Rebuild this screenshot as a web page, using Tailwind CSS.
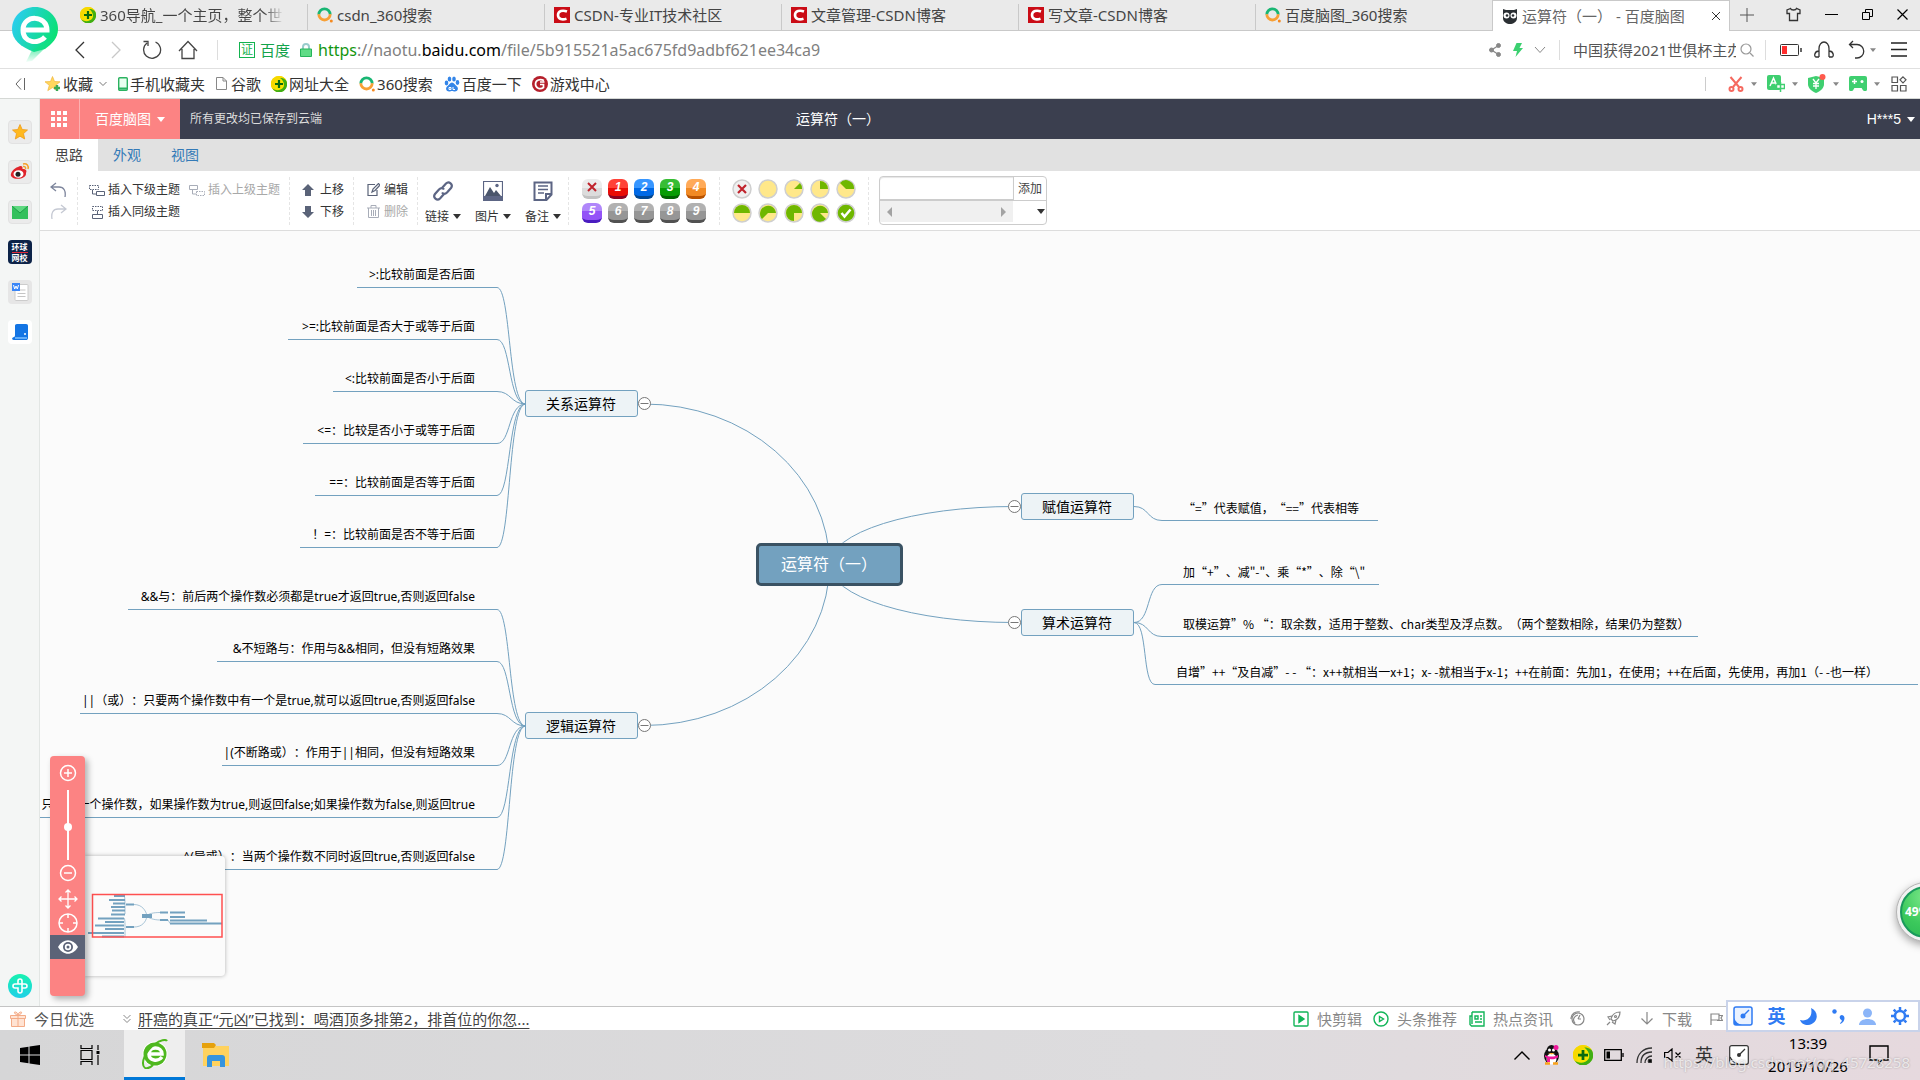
<!DOCTYPE html>
<html lang="zh-CN">
<head>
<meta charset="utf-8">
<title>运算符（一） - 百度脑图</title>
<script src="https://cdn.jsdelivr.net/npm/@tailwindcss/browser@4"></script>
</head>
<body class="h-screen flex flex-col overflow-hidden bg-white text-[15px] leading-5 text-[#444] font-['Noto_Sans','Noto_Sans_CJK_SC',sans-serif] [text-spacing-trim:space-all] whitespace-nowrap relative">

<!-- shared symbols -->
<svg class="absolute size-0" aria-hidden="true">
  <defs>
    <linearGradient id="gLogo" x1="0" y1="0.3" x2="1" y2="0.7"><stop offset="0" stop-color="#2bcdf0"/><stop offset="1" stop-color="#08e26c"/></linearGradient>
    <linearGradient id="gTail" x1="0" y1="0" x2="0" y2="1"><stop offset="0" stop-color="#10e084"/><stop offset="1" stop-color="#10e084" stop-opacity="0.05"/></linearGradient>
    <linearGradient id="gPlus" x1="0" y1="0" x2="0" y2="1"><stop offset="0" stop-color="#17f2b0"/><stop offset="1" stop-color="#20d0e8"/></linearGradient>
    <radialGradient id="gBall" cx="0.5" cy="0.2" r="0.9"><stop offset="0" stop-color="#7be88a"/><stop offset="0.6" stop-color="#3cc95c"/><stop offset="1" stop-color="#2cba55"/></radialGradient>
    <symbol id="i360" viewBox="0 0 16 16"><circle cx="8" cy="8" r="8" fill="#f5e400"/><path d="M8 0a8 8 0 0 1 7.500 5.200C12 1.500 5 2 3.500 8.500 3 11 4 14 6 15.800A8 8 0 0 1 8 0Z" fill="#f7d800"/><path d="M16 7a8 8 0 0 1-15 5c3 3 9 3 11.500-1C14 8 12 4 9 2c4 0 7 2 7 5Z" fill="#3fae14"/><path d="M8 4v8M4 8h8" stroke="#0a6a10" stroke-width="2.200"/></symbol>
    <symbol id="iSo" viewBox="0 0 16 16"><path d="M1.800 7.500a5.700 5.700 0 0 1 11.400 0" fill="none" stroke="#19b673" stroke-width="2.800"/><path d="M1.800 7.300a5.700 5.700 0 0 0 11.400 0" fill="none" stroke="#f8a035" stroke-width="2.800"/><circle cx="14.300" cy="14" r="1.500" fill="#f58a20"/></symbol>
    <symbol id="iC" viewBox="0 0 16 16"><path d="M0 0h16v16H0z" fill="#ca0c16"/><path d="M13 4.500C9 3 4 3.500 4 8s4.500 5 8.500 3.700" fill="none" stroke="#fff" stroke-width="2.600"/></symbol>
    <symbol id="iCaret" viewBox="0 0 8 5"><path d="M0 0h8L4 5z" fill="currentColor"/></symbol>
  </defs>
</svg>

<!-- browser tab strip -->
<nav aria-label="标签页" class="h-[31px] shrink-0 bg-[#eaeaea] border-b border-[#c9c9c9] flex items-end pl-[70px]">
  <a href="#" class="w-[238px] h-[26px] border-r border-[#c9c9c9] pl-[10px] pb-1 flex items-center gap-1"><svg class="size-4 shrink-0"><use href="#i360"/></svg><span class="w-[182px] overflow-hidden bg-linear-to-r from-[#444] from-90% to-[#444]/10 bg-clip-text text-transparent">360导航_一个主页，整个世界</span></a>
  <a href="#" class="w-[237px] h-[26px] border-r border-[#c9c9c9] pl-[9px] pb-1 flex items-center gap-1"><svg class="size-4 shrink-0"><use href="#iSo"/></svg><span>csdn_360搜索</span></a>
  <a href="#" class="w-[237px] h-[26px] border-r border-[#c9c9c9] pl-[9px] pb-1 flex items-center gap-1"><svg class="size-4 shrink-0"><use href="#iC"/></svg><span>CSDN-专业IT技术社区</span></a>
  <a href="#" class="w-[237px] h-[26px] border-r border-[#c9c9c9] pl-[9px] pb-1 flex items-center gap-1"><svg class="size-4 shrink-0"><use href="#iC"/></svg><span>文章管理-CSDN博客</span></a>
  <a href="#" class="w-[237px] h-[26px] border-r border-[#c9c9c9] pl-[9px] pb-1 flex items-center gap-1"><svg class="size-4 shrink-0"><use href="#iC"/></svg><span>写文章-CSDN博客</span></a>
  <a href="#" class="w-[236px] h-[26px] pl-[9px] pb-1 flex items-center gap-1"><svg class="size-4 shrink-0"><use href="#iSo"/></svg><span>百度脑图_360搜索</span></a>
  <div class="w-[238px] h-[31px] -mb-px bg-white border border-b-0 border-[#c9c9c9] pl-[9px] pr-2 flex items-center gap-1">
    <svg class="size-4 shrink-0" viewBox="0 0 16 16"><path d="M1 1l3 1h8l3-1v9c0 4-4 6-7 6s-7-2-7-6z" fill="#2a2f33"/><circle cx="4.500" cy="7.500" r="3" fill="#fff"/><circle cx="11.500" cy="7.500" r="3" fill="#fff"/><circle cx="5" cy="7.500" r="1.300" fill="#2a2f33"/><circle cx="11" cy="7.500" r="1.300" fill="#2a2f33"/></svg>
    <a href="#" class="flex-1 overflow-hidden text-[#666]">运算符（一） - 百度脑图</a>
    <button aria-label="关闭标签"><svg class="size-[10px] stroke-[#333]" viewBox="0 0 10 10"><path d="M1 1l8 8M9 1L1 9"/></svg></button>
  </div>
  <div class="flex-1 h-[31px] flex items-center pl-[10px] text-[#333]">
    <button aria-label="新建标签"><svg class="size-[14px] stroke-[#555]" viewBox="0 0 14 14"><path d="M7 0v14M0 7h14"/></svg></button>
    <div class="ml-auto mr-3 flex items-center gap-6">
      <button aria-label="皮肤"><svg class="size-[15px] stroke-current fill-none" viewBox="0 0 15 15" stroke-width="1.300"><path d="M4.500 1.500L1 3v3.500h2.500V13.500h8V6.500H14V3l-3.500-1.500C10 3.500 5 3.500 4.500 1.500z"/></svg></button>
      <button aria-label="最小化"><svg class="size-[13px] stroke-black" viewBox="0 0 13 13"><path d="M0 6.500h13"/></svg></button>
      <button aria-label="还原"><svg class="size-[11px] stroke-black fill-none" viewBox="0 0 11 11"><path d="M.5 3.500h7v7h-7zM3.500 3.500v-3h7v7h-3"/></svg></button>
      <button aria-label="关闭"><svg class="size-[11px] stroke-black" viewBox="0 0 11 11" stroke-width="1.200"><path d="M.5.5l10 10M10.500.5l-10 10"/></svg></button>
    </div>
  </div>
</nav>

<!-- address bar -->
<div class="h-[38px] shrink-0 border-b border-[#e0e0e0] flex items-center pl-[62px] pr-[13px]">
  <button aria-label="后退" class="w-9 flex justify-center"><svg class="w-[10px] h-[18px] stroke-[#333] fill-none" viewBox="0 0 10 18" stroke-width="1.300"><path d="M9 1L1 9l8 8"/></svg></button>
  <button aria-label="前进" class="w-9 flex justify-center"><svg class="w-[10px] h-[18px] stroke-[#c8c8c8] fill-none" viewBox="0 0 10 18" stroke-width="1.300"><path d="M1 1l8 8-8 8"/></svg></button>
  <button aria-label="刷新" class="w-9 flex justify-center"><svg class="size-5 stroke-[#444] fill-none" viewBox="0 0 20 20" stroke-width="1.300"><path d="M13.500 2A8.500 8.500 0 1 1 5 3M1.500 1.500h4.500v4.500"/></svg></button>
  <button aria-label="主页" class="w-9 flex justify-center"><svg class="size-5 stroke-[#444] fill-none" viewBox="0 0 20 20" stroke-width="1.300"><path d="M1 11l9-9.500L19 11M4 9v9.500h12V9"/></svg></button>
  <span class="ml-[11px] w-px h-5 bg-[#ddd]"></span>
  <span class="ml-[21px] size-4 border border-[#13b34f] text-[#13b34f] text-[12px] leading-[14px] text-center">证</span>
  <span class="ml-[5px] text-[#13a34a]">百度</span>
  <svg class="ml-[10px] w-3 h-[14px]" viewBox="0 0 12 14"><path d="M3 6V4a3 3 0 0 1 6 0v2" fill="none" stroke="#9cc" stroke-width="2"/><path d="M.5 6h11v7.500H.5z" fill="#5fdc86" stroke="#27b45b"/></svg>
  <div role="textbox" aria-label="地址" tabindex="0" class="ml-[6px] flex-1 text-[16px] text-[#808080]"><span class="text-[#14960f]">https</span>://naotu.<span class="text-black">baidu.com</span>/file/5b915521a5ac675fd9adbf621ee34ca9</div>
  <div class="flex items-center">
    <svg class="w-3 h-[14px] fill-[#888] stroke-[#888]" viewBox="0 0 12 14"><path d="M9.500 2.500L2.500 7l7 4.500" fill="none" stroke-width="1.300"/><circle cx="9.500" cy="2.500" r="2"/><circle cx="2.500" cy="7" r="2"/><circle cx="9.500" cy="11.500" r="2"/></svg>
    <svg class="ml-3 w-[10px] h-[14px] fill-[#3bd070]" viewBox="0 0 10 14"><path d="M3.500 0H9L6.500 5H10L2.500 14 4 8H0z"/></svg>
    <svg class="ml-[11px] w-3 h-2 stroke-[#888] fill-none" viewBox="0 0 12 8"><path d="M1 1l5 5.500L11 1"/></svg>
    <span class="ml-[13px] w-px h-5 bg-[#ddd]"></span>
    <input aria-label="搜索" value="中国获得2021世俱杯主办" class="ml-[13px] w-[163px] outline-none text-[#555]">
    <button aria-label="搜索" class="ml-1"><svg class="size-[14px] stroke-[#999] fill-none" viewBox="0 0 14 14" stroke-width="1.200"><circle cx="6" cy="6" r="5"/><path d="M10 10l3.500 3.500"/></svg></button>
    <span class="ml-[11px] w-px h-5 bg-[#ddd]"></span>
    <svg class="ml-[14px] w-[22px] h-[12px]" viewBox="0 0 22 12"><rect x=".5" y=".5" width="18" height="11" rx="1" fill="none" stroke="#333"/><path d="M21 4v4" stroke="#333" stroke-width="1.500"/><path d="M2 2h5v8H2z" fill="#ff2d2d"/></svg>
    <svg class="ml-3 size-5 stroke-[#333] fill-none" viewBox="0 0 20 20" stroke-width="1.300"><path d="M5 17V8.500a5 6.500 0 0 1 10 0V17M5 11c-5 0-5 6-3 6h3M15 11c5 0 5 6 3 6h-3"/></svg>
    <svg class="ml-[14px] w-[18px] h-5 stroke-[#333] fill-none" viewBox="0 0 18 20" stroke-width="1.300"><path d="M5 1L1.500 4.500 5 8M2 4.500h7a6.500 6.500 0 0 1 0 13.500H7"/></svg>
    <svg class="ml-1 w-[6px] h-1 text-[#888]"><use href="#iCaret"/></svg>
    <button aria-label="菜单" class="ml-[15px]"><svg class="w-4 h-[15px] stroke-[#222]" viewBox="0 0 16 15" stroke-width="1.300"><path d="M0 1h16M0 7.500h16M0 14h16"/></svg></button>
  </div>
</div>

<!-- bookmarks bar -->
<div class="h-[30px] shrink-0 border-b border-[#d5d8d5] flex items-center pl-[15px] pr-[13px] text-[#333]">
  <svg class="w-[10px] h-3 stroke-[#666] fill-none" viewBox="0 0 10 12"><path d="M6 .5L1 6l5 5.500M9.500 0v12"/></svg>
  <a href="#" class="ml-5 flex items-center gap-[2px]"><svg class="size-4" viewBox="0 0 16 16"><path d="M7.500.5l2 5 5.500.3-4.300 3.500 1.500 5.300-4.700-3-4.700 3 1.500-5.300L0 5.800l5.500-.3z" fill="#ffd75e" stroke="#f0b53a" stroke-width=".7"/><path d="M12 9v6M9 12h6" stroke="#3aa855" stroke-width="2.400"/></svg>收藏</a>
  <svg class="ml-[6px] w-2 h-[6px] stroke-[#777] fill-none" viewBox="0 0 8 6"><path d="M.5 1L4 4.500 7.500 1"/></svg>
  <a href="#" class="ml-[11px] flex items-center gap-[2px]"><svg class="w-[10px] h-[14px]" viewBox="0 0 10 14"><rect x=".7" y=".7" width="8.600" height="12.600" rx="1" fill="#eafff0" stroke="#2bb260" stroke-width="1.400"/><path d="M1 11.500h8" stroke="#2bb260" stroke-width="2"/></svg>手机收藏夹</a>
  <a href="#" class="ml-[11px] flex items-center gap-1"><svg class="w-[11px] h-[13px] stroke-[#888] fill-white" viewBox="0 0 11 13"><path d="M.5.5h6.500l3.500 3.500v8.500H.5zM7 .5V4h3.500"/></svg>谷歌</a>
  <a href="#" class="ml-[10px] flex items-center gap-[2px]"><svg class="size-4"><use href="#i360"/></svg>网址大全</a>
  <a href="#" class="ml-[10px] flex items-center gap-[2px]"><svg class="size-4"><use href="#iSo"/></svg>360搜索</a>
  <a href="#" class="ml-[11px] flex items-center gap-[2px]"><svg class="size-4 fill-[#3385e8]" viewBox="0 0 16 16"><ellipse cx="2.500" cy="7" rx="1.800" ry="2.400"/><ellipse cx="5.500" cy="3" rx="1.800" ry="2.500"/><ellipse cx="10" cy="3" rx="1.800" ry="2.500"/><ellipse cx="13.500" cy="6.500" rx="1.800" ry="2.400"/><path d="M8 6.500c2 0 3 2.500 5 4 2 2 .5 5-2 5-1.500 0-2-.5-3-.5s-1.500.5-3 .5c-2.500 0-4-3-2-5 2-1.500 3-4 5-4z"/><path d="M5 11.500h2v2H5zM9 11v2.500h2" fill="none" stroke="#fff"/></svg>百度一下</a>
  <a href="#" class="ml-[10px] flex items-center gap-[2px]"><svg class="size-4" viewBox="0 0 16 16"><circle cx="8" cy="8" r="8" fill="#b51f2b"/><path d="M12 4.500C8 2.500 3.500 4 3.500 8s4.500 6 8 3.500V8.500H8M8 6h4.500" fill="none" stroke="#fff" stroke-width="1.700"/></svg>游戏中心</a>
  <div class="ml-auto flex items-center text-[#888]">
    <span class="w-px h-[14px] bg-[#ccc]"></span>
    <svg class="ml-[22px] size-4 fill-none stroke-[#f5695f]" viewBox="0 0 16 16" stroke-width="2"><path d="M2.500 1l8.500 10M13.500 1L5 11"/><circle cx="3.500" cy="13" r="2"/><circle cx="12.500" cy="13" r="2"/></svg>
    <svg class="ml-[7px] w-[6px] h-1"><use href="#iCaret"/></svg>
    <svg class="ml-[10px] w-[18px] h-[17px]" viewBox="0 0 18 17"><rect width="14" height="15" rx="2" fill="#3fcf70"/><path d="M3 11l3.500-8L10 11M4.500 8h4" fill="none" stroke="#fff" stroke-width="1.500"/><path d="M9.500 9.500h8v4h-8zM13.500 7v10" fill="#fff" stroke="#3fcf70" stroke-width="1.500"/></svg>
    <svg class="ml-[7px] w-[6px] h-1"><use href="#iCaret"/></svg>
    <svg class="ml-[10px] w-[18px] h-[19px]" viewBox="0 0 18 19"><path d="M8 2l8 2v6c0 4-3 7-8 9-5-2-8-5-8-9V4z" fill="#3fcf70"/><path d="M5 5l3 4 3-4M8 9v6M5 9.500h6M5 12h6" fill="none" stroke="#fff" stroke-width="1.300"/><circle cx="14.500" cy="3" r="3" fill="#ff5a4d"/></svg>
    <svg class="ml-[7px] w-[6px] h-1"><use href="#iCaret"/></svg>
    <svg class="ml-[10px] w-[18px] h-[15px]" viewBox="0 0 18 15"><rect width="18" height="12" rx="2" fill="#3fcf70"/><path d="M0 8v5.500c0 2 4 2 4.500 0L6 11h6l1.500 2.500c1 2 4.500 2 4.500 0V8z" fill="#3fcf70"/><path d="M5.500 3v5M3 5.500h5" stroke="#fff" stroke-width="1.500"/><circle cx="13" cy="5.500" r="1.500" fill="#fff"/></svg>
    <svg class="ml-[7px] w-[6px] h-1"><use href="#iCaret"/></svg>
    <svg class="ml-[11px] size-4 fill-none stroke-[#555]" viewBox="0 0 16 16" stroke-width="1.200"><path d="M1 1h5.500v5.500H1zM1 9.500h5.500V15H1zM9.500 9.500H15V15H9.500z"/><path d="M12 .8l3 3-3 3-3-3z"/></svg>
  </div>
</div>

<!-- page area -->
<div class="flex-1 min-h-0 flex">
  <!-- browser side bar -->
  <aside class="w-10 shrink-0 bg-[#f4f6f5] border-r border-[#e2e6e4] flex flex-col items-center gap-4 pt-[21px] pb-2">
    <button aria-label="收藏" class="size-6 rounded bg-[#ebebeb] border border-[#e2e2e2] flex items-center justify-center"><svg class="size-4" viewBox="0 0 16 16"><path d="M8 .5l2.200 5 5.300.5-4 3.600 1.200 5.400L8 12.200 3.300 15l1.200-5.400L.5 6l5.300-.5z" fill="#ffb91f" stroke="#ef9a1a" stroke-width=".8"/></svg></button>
    <button aria-label="微博" class="size-6 rounded bg-[#ebebeb] border border-[#e2e2e2] flex items-center justify-center"><svg class="size-5" viewBox="0 0 20 20"><path d="M8 5c3-2 5-1 4.500 2 4 0 4.500 2 3.500 4 1 6-12 8-15 3-1-3 3-8 7-9z" fill="#e0242b"/><ellipse cx="8.500" cy="12" rx="5" ry="3.800" fill="#fff"/><circle cx="8" cy="12.300" r="2.500" fill="#222"/><path d="M13 2c4-1 6 2 5 5M13 4.500c2-.5 3 1 2.500 2.500" fill="none" stroke="#f5a02a" stroke-width="1.500"/></svg></button>
    <button aria-label="邮箱" class="size-6 rounded bg-[#ebebeb] border border-[#e2e2e2] flex items-center justify-center"><svg class="w-4 h-[13px]" viewBox="0 0 16 13"><path d="M0 0h16v13H0z" fill="#35c05d"/><path d="M0 0l8 7 8-7" fill="#5fd880" stroke="#1e9c46"/></svg></button>
    <button class="size-6 rounded bg-[#0c2348] text-white text-[8px] leading-[10px] font-bold flex flex-col items-center justify-center"><span>环球</span><span class="w-4 h-px bg-[#e02a3a]"></span><span>网校</span></button>
    <button aria-label="文档" class="size-6 rounded bg-[#e6e6e6] flex items-center justify-center"><svg class="size-[18px]" viewBox="0 0 18 18"><rect x="4" y="1.500" width="13" height="16" rx="1" fill="#fff" stroke="#ccc"/><path d="M9 7h5.500M6.500 10.500h8M6.500 13.500h8" stroke="#c5c5c5" stroke-width="1.200"/><path d="M1 0h8v8H1z" fill="#3b86f7"/><path d="M2.500 2l1.200 4L5 3l1.300 3 1.200-4" fill="none" stroke="#fff"/></svg></button>
    <button aria-label="笔记" class="size-6 rounded bg-white flex items-center justify-center"><svg class="size-[18px]" viewBox="0 0 18 18"><path d="M6 1h9c1.500 0 2 .7 2 2v12c0 1.500-1 2-2 2H3c-2 0-2.500-2-1-2.500 1.500-.5 2-1 2-2.500V3c0-1.300.7-2 2-2z" fill="#1475e4"/><path d="M4 15h12" stroke="#7cc0ff" stroke-width="1.500"/><circle cx="14" cy="11" r="1" fill="#fff"/></svg></button>
    <button aria-label="添加" class="mt-auto"><svg class="size-6" viewBox="0 0 24 24"><circle cx="12" cy="12" r="12" fill="url(#gPlus)"/><path d="M10 10V7a2 2 0 0 1 4 0v10a2 2 0 0 1-4 0v-3H7a2 2 0 0 1 0-4h10a2 2 0 0 1 0 4h-3" fill="none" stroke="#fff" stroke-width="1.600"/></svg></button>
  </aside>

  <div class="flex-1 min-w-0 flex flex-col">
    <!-- app header -->
    <header class="h-10 shrink-0 bg-[#3b3f4f] flex items-center text-[14px] text-white">
      <button aria-label="应用" class="w-10 h-10 bg-[#fc8383] border-r border-[#fdb0b0] pr-px flex items-center justify-center"><svg class="size-4 fill-white" viewBox="0 0 16 16"><path d="M0 0h4v4H0zM6 0h4v4H6zM12 0h4v4h-4zM0 6h4v4H0zM6 6h4v4H6zM12 6h4v4h-4zM0 12h4v4H0zM6 12h4v4H6zM12 12h4v4h-4z"/></svg></button>
      <button class="w-[100px] h-10 bg-[#fc8383] flex items-center justify-center gap-[6px]">百度脑图<svg class="w-2 h-[5px]"><use href="#iCaret"/></svg></button>
      <span class="ml-[10px] w-[606px] text-[12px] text-[#ddd]">所有更改均已保存到云端</span>
      <h1>运算符（一）</h1>
      <button class="ml-auto mr-[5px] flex items-center gap-[6px] font-['Liberation_Sans',sans-serif]">H***5<svg class="w-2 h-[5px]"><use href="#iCaret"/></svg></button>
    </header>
    <!-- ribbon tabs -->
    <nav class="h-8 shrink-0 bg-[#e1e1e1] flex text-[14px] leading-8 text-[#337ab7]">
      <a href="#" class="w-[58px] bg-white text-center text-[#444]">思路</a>
      <a href="#" class="w-[58px] text-center">外观</a>
      <a href="#" class="w-[58px] text-center">视图</a>
    </nav>
    <!-- ribbon -->
    <div class="h-[60px] shrink-0 bg-white border-b border-[#ddd] flex items-center text-[12px] leading-4 text-[#333]">
      <div class="w-[38px] h-12 border-r border-dashed border-[#e5e5e5] flex flex-col justify-center items-center gap-[6px] text-[#7d859c]">
        <button aria-label="撤销"><svg class="w-[17px] h-4 fill-none stroke-current" viewBox="0 0 17 16" stroke-width="1.300"><path d="M6 1L1 5l5 4M1 5h8c5 0 7 4 6 10"/></svg></button>
        <button aria-label="重做"><svg class="w-[17px] h-4 fill-none stroke-[#c5c9d3]" viewBox="0 0 17 16" stroke-width="1.300"><path d="M11 1l5 4-5 4M16 5H8C3 5 1 9 2 15"/></svg></button>
      </div>
      <div class="w-[212px] h-12 border-r border-dashed border-[#e5e5e5] pl-[11px] grid grid-cols-[100px_100px] content-center gap-y-[6px]">
        <button class="flex items-center gap-[3px]"><svg class="size-4 fill-none stroke-[#5a6378]" viewBox="0 0 16 16"><path d="M.5 3.500h9v4h-9z" stroke-dasharray="1.500 1"/><path d="M3.500 8v4h4M7.500 9.500h8v4h-8z"/></svg>插入下级主题</button>
        <button class="flex items-center gap-[3px] text-[#a8a8a8]" disabled><svg class="size-4 fill-none stroke-[#a8adb8]" viewBox="0 0 16 16"><path d="M.5 3.500h8v4h-8zM3.500 8v4h4"/><path d="M7.500 9.500h8v4h-8z" stroke-dasharray="1.500 1"/></svg>插入上级主题</button>
        <button class="flex items-center gap-[3px]"><svg class="size-4 fill-none stroke-[#5a6378]" viewBox="0 0 16 16"><path d="M3.500 2.500h10v4h-10z" stroke-dasharray="1.500 1"/><path d="M8.500 7v3.500M3.500 10.500h10v4h-10z"/></svg>插入同级主题</button>
      </div>
      <div class="w-16 h-12 border-r border-dashed border-[#e5e5e5] pl-3 flex flex-col justify-center gap-[6px]">
        <button class="flex items-center gap-[6px]"><svg class="size-3 fill-[#5a6378]" viewBox="0 0 12 12"><path d="M6 0l6 6H9v6H3V6H0z"/></svg>上移</button>
        <button class="flex items-center gap-[6px]"><svg class="size-3 fill-[#5a6378]" viewBox="0 0 12 12"><path d="M6 12l6-6H9V0H3v6H0z"/></svg>下移</button>
      </div>
      <div class="w-16 h-12 border-r border-dashed border-[#e5e5e5] pl-[13px] flex flex-col justify-center gap-[6px]">
        <button class="flex items-center gap-1"><svg class="size-[13px] fill-none stroke-[#5a6378]" viewBox="0 0 13 13" stroke-width="1.200"><path d="M8 1.500H1v11h9V7M5 9l1-3 5.500-5.500L13 2 8 7.500z"/></svg>编辑</button>
        <button class="flex items-center gap-1 text-[#a8a8a8]" disabled><svg class="size-[13px] fill-none stroke-[#a8adb8]" viewBox="0 0 13 13"><path d="M0 3h13M4 3V.5h5V3M1.500 3v9.500h10V3M4.500 5v6M6.500 5v6M8.500 5v6"/></svg>删除</button>
      </div>
      <div class="w-[151px] h-12 border-r border-dashed border-[#e5e5e5] flex">
        <button class="w-[50px] flex flex-col items-center justify-between pt-1"><svg class="size-5 fill-none stroke-[#5c6584]" viewBox="0 0 20 20" stroke-width="2.200"><path d="M9 7l4-4.500c3-3 7.500 1 5 4.500l-4 4.500c-2 2-4 1.500-5 0M11 13l-4 4.500c-3 3-7.500-1-5-4.500l4-4.500c2-2 4-1.500 5 0"/></svg><span class="flex items-center gap-1">链接<svg class="w-2 h-[5px]"><use href="#iCaret"/></svg></span></button>
        <button class="w-[50px] flex flex-col items-center justify-between pt-1"><svg class="size-5" viewBox="0 0 20 20"><path d="M.5.5h19v15H.5z" fill="#fff" stroke="#5c6584" stroke-width="1.200"/><path d="M0 16h20v4H0z" fill="#5c6584"/><path d="M2 15l5-9 4 6 2-3 5 6z" fill="#4a556b"/><circle cx="14" cy="4.500" r="1.700" fill="#5c6584"/></svg><span class="flex items-center gap-1">图片<svg class="w-2 h-[5px]"><use href="#iCaret"/></svg></span></button>
        <button class="w-[50px] flex flex-col items-center justify-between pt-1"><svg class="size-5 fill-none stroke-[#5c6584]" viewBox="0 0 20 20" stroke-width="2"><path d="M1.500 1.500h17v12l-5 5.500h-12zM18 13h-5v6"/><path d="M5 5h10M5 8.500h10M5 12h6" stroke-width="1.500"/></svg><span class="flex items-center gap-1">备注<svg class="w-2 h-[5px]"><use href="#iCaret"/></svg></span></button>
      </div>
      <!-- priority -->
      <div class="w-[151px] h-12 border-r border-dashed border-[#e5e5e5] pl-[13px] grid grid-cols-[repeat(5,20px)] gap-x-[6px] gap-y-1 content-center text-[12px] leading-[17px] font-bold italic text-white font-['Liberation_Sans',sans-serif]">
        <button aria-label="移除优先级" class="size-5 rounded-md bg-linear-to-b from-[#ececec] from-50% to-[#dcdcdc] to-50% border-b-3 border-[#c2c2c2] flex items-center justify-center"><svg class="size-[10px] stroke-[#c0232c]" viewBox="0 0 10 10" stroke-width="2"><path d="M1 1l8 8M9 1L1 9"/></svg></button>
        <button class="size-5 rounded-md bg-linear-to-b from-[#ff4238] from-50% to-[#ea0c06] to-50% border-b-3 border-[#8c0322]">1</button>
        <button class="size-5 rounded-md bg-linear-to-b from-[#3796ff] from-50% to-[#0069e6] to-50% border-b-3 border-[#02468f]">2</button>
        <button class="size-5 rounded-md bg-linear-to-b from-[#38bd35] from-50% to-[#079c04] to-50% border-b-3 border-[#006300]">3</button>
        <button class="size-5 rounded-md bg-linear-to-b from-[#ffaa58] from-50% to-[#f18a24] to-50% border-b-3 border-[#b85200]">4</button>
        <button class="size-5 rounded-md bg-linear-to-b from-[#b087fa] from-50% to-[#9353f7] to-50% border-b-3 border-[#4a1cc0]">5</button>
        <button class="size-5 rounded-md bg-linear-to-b from-[#b1b1b1] from-50% to-[#969696] to-50% border-b-3 border-[#515151]">6</button>
        <button class="size-5 rounded-md bg-linear-to-b from-[#b1b1b1] from-50% to-[#969696] to-50% border-b-3 border-[#515151]">7</button>
        <button class="size-5 rounded-md bg-linear-to-b from-[#b1b1b1] from-50% to-[#969696] to-50% border-b-3 border-[#515151]">8</button>
        <button class="size-5 rounded-md bg-linear-to-b from-[#b1b1b1] from-50% to-[#969696] to-50% border-b-3 border-[#515151]">9</button>
      </div>
      <!-- progress -->
      <div class="w-[149px] h-12 border-r border-dashed border-[#e5e5e5] pl-3 grid grid-cols-[repeat(5,20px)] gap-x-[6px] gap-y-1 content-center">
        <button aria-label="移除进度"><svg class="size-5" viewBox="-10 -10 20 20"><circle r="9" fill="#f0f0f0" stroke="#cfcfcf" stroke-width="1.500"/><path d="M-4-4L4 4M4-4L-4 4" stroke="#c0232c" stroke-width="2.200"/></svg></button>
        <button aria-label="未开始"><svg class="size-5" viewBox="-10 -10 20 20"><circle r="9" fill="#ffe88a" stroke="#cfcfcf" stroke-width="1.500"/></svg></button>
        <button aria-label="1/8"><svg class="size-5" viewBox="-10 -10 20 20"><circle r="9" fill="#ffe88a" stroke="#cfcfcf" stroke-width="1.500"/><path d="M0 0L6-6A8 8 0 0 1 8 0z" fill="#6fb700"/></svg></button>
        <button aria-label="2/8"><svg class="size-5" viewBox="-10 -10 20 20"><circle r="9" fill="#ffe88a" stroke="#cfcfcf" stroke-width="1.500"/><path d="M0 0V-8A8 8 0 0 1 8 0z" fill="#6fb700"/></svg></button>
        <button aria-label="3/8"><svg class="size-5" viewBox="-10 -10 20 20"><circle r="9" fill="#ffe88a" stroke="#cfcfcf" stroke-width="1.500"/><path d="M0 0L-6-6A8 8 0 0 1 8 0z" fill="#6fb700"/></svg></button>
        <button aria-label="4/8"><svg class="size-5" viewBox="-10 -10 20 20"><circle r="9" fill="#ffe88a" stroke="#cfcfcf" stroke-width="1.500"/><path d="M-8 0A8 8 0 0 1 8 0z" fill="#6fb700"/></svg></button>
        <button aria-label="5/8"><svg class="size-5" viewBox="-10 -10 20 20"><circle r="9" fill="#ffe88a" stroke="#cfcfcf" stroke-width="1.500"/><path d="M0 0L-6 6A8 8 0 1 1 8 0z" fill="#6fb700"/></svg></button>
        <button aria-label="6/8"><svg class="size-5" viewBox="-10 -10 20 20"><circle r="9" fill="#ffe88a" stroke="#cfcfcf" stroke-width="1.500"/><path d="M0 0V8A8 8 0 1 1 8 0z" fill="#6fb700"/></svg></button>
        <button aria-label="7/8"><svg class="size-5" viewBox="-10 -10 20 20"><circle r="9" fill="#ffe88a" stroke="#cfcfcf" stroke-width="1.500"/><path d="M0 0L6 6A8 8 0 1 1 8 0z" fill="#6fb700"/></svg></button>
        <button aria-label="已完成"><svg class="size-5" viewBox="-10 -10 20 20"><circle r="9" fill="#6fb700" stroke="#cfcfcf" stroke-width="1.500"/><path d="M-4.500 0L-1.500 3.500 4.500-3.500" fill="none" stroke="#fff" stroke-width="2.500"/></svg></button>
      </div>
      <!-- resource -->
      <div class="ml-[10px] w-[168px] h-[49px] border border-[#ccc] rounded flex flex-col">
        <div class="flex h-6 border-b border-[#ccc]">
          <input aria-label="资源" class="w-[134px] border-r border-b border-[#ccc] rounded-tl shadow-[inset_0_1px_1px_rgba(0,0,0,0.1)]">
          <button class="flex-1 text-[#444]">添加</button>
        </div>
        <div class="flex h-[21px]">
          <div class="w-[133px] bg-[#f0f0f0] flex items-center justify-between px-[7px]"><svg class="w-[5px] h-[10px] fill-[#a3a3a3]" viewBox="0 0 5 10"><path d="M5 0v10L0 5z"/></svg><svg class="w-[5px] h-[10px] fill-[#a3a3a3]" viewBox="0 0 5 10"><path d="M0 0v10l5-5z"/></svg></div>
          <button aria-label="更多" class="flex-1 flex items-center justify-end pr-[1px]"><svg class="w-2 h-[5px]"><use href="#iCaret"/></svg></button>
        </div>
      </div>
    </div>

    <!-- mind map canvas -->
    <main class="flex-1 min-h-0 relative overflow-hidden bg-[#fbfbfb] text-[12px] leading-6 text-black">
      <svg class="absolute inset-0 size-full" aria-hidden="true">
        <g transform="translate(-40 -231)" fill="none" stroke="#73a1bf">
          <path d="M644 404A185.500 160.500 0 0 1 829.500 564.500A185.500 161 0 0 1 644 725.500"/>
          <path d="M1014 506.500A184.500 58 0 0 0 829.500 564.500A184.500 58 0 0 0 1014 622.500"/>
          <path d="M497 287.500C511 287.500 508 404 525.500 404M497 339.500C511 339.500 508 404 525.500 404M497 391.500C511 391.500 511 404 525.500 404M497 443.500C511 443.500 508 404 525.500 404M497 495.500C511 495.500 508 404 525.500 404M497 547.500C511 547.500 508 404 525.500 404"/>
          <path d="M497 609.500C511 609.500 508 726 525.500 726M497 661.500C511 661.500 508 726 525.500 726M497 713.500C511 713.500 511 726 525.500 726M497 765.500C511 765.500 508 726 525.500 726M497 817.500C511 817.500 508 726 525.500 726M497 869.500C511 869.500 508 726 525.500 726"/>
          <path d="M1134 506.500C1149 506.500 1147 520.500 1162 520.500M1134 622.500C1151 622.500 1146 584.500 1162 584.500M1134 622.500C1149 622.500 1147 636.500 1162 636.500M1134 622.500C1148 622.500 1142 684.500 1155 684.500"/>
          <g fill="#fff" stroke="#777"><circle cx="644.500" cy="403.500" r="6"/><circle cx="644.500" cy="725.500" r="6"/><circle cx="1014.500" cy="506.500" r="6"/><circle cx="1014.500" cy="622.500" r="6"/><path d="M640.500 403.500h8M640.500 725.500h8M1010.500 506.500h8M1010.500 622.500h8"/></g>
        </g>
      </svg>
      <!-- root -->
      <div class="absolute left-[716px] top-[312px] w-[147px] h-[43px] rounded-[5px] border-3 border-[#3a5263] bg-[#73a1bf] text-white text-[16px] leading-[37px] pl-[22px]">运算符（一）</div>
      <!-- branches -->
      <div class="absolute left-[485px] top-[159px] w-[113px] h-[27px] rounded-[3px] border border-[#73a1bf] bg-[#edf3f6] text-[14px] leading-[25px] pl-5">关系运算符</div>
      <div class="absolute left-[485px] top-[481px] w-[113px] h-[27px] rounded-[3px] border border-[#73a1bf] bg-[#edf3f6] text-[14px] leading-[25px] pl-5">逻辑运算符</div>
      <div class="absolute left-[981px] top-[262px] w-[113px] h-[27px] rounded-[3px] border border-[#73a1bf] bg-[#edf3f6] text-[14px] leading-[25px] pl-5">赋值运算符</div>
      <div class="absolute left-[981px] top-[378px] w-[113px] h-[27px] rounded-[3px] border border-[#73a1bf] bg-[#edf3f6] text-[14px] leading-[25px] pl-5">算术运算符</div>
      <!-- leaves of 关系运算符 -->
      <div class="absolute left-[317px] top-8 w-[140px] border-b border-[#73a1bf] pr-[22px] flex justify-end">&gt;:比较前面是否后面</div>
      <div class="absolute left-[248px] top-[84px] w-[209px] border-b border-[#73a1bf] pr-[22px] flex justify-end">&gt;=:比较前面是否大于或等于后面</div>
      <div class="absolute left-[293px] top-[136px] w-[164px] border-b border-[#73a1bf] pr-[22px] flex justify-end">&lt;:比较前面是否小于后面</div>
      <div class="absolute left-[263px] top-[188px] w-[194px] border-b border-[#73a1bf] pr-[22px] flex justify-end">&lt;=：比较是否小于或等于后面</div>
      <div class="absolute left-[275px] top-[240px] w-[182px] border-b border-[#73a1bf] pr-[22px] flex justify-end">==：比较前面是否等于后面</div>
      <div class="absolute left-[260px] top-[292px] w-[197px] border-b border-[#73a1bf] pr-[22px] flex justify-end">！=：比较前面是否不等于后面</div>
      <!-- leaves of 逻辑运算符 -->
      <div class="absolute left-[88px] top-[354px] w-[369px] border-b border-[#73a1bf] pr-[22px] flex justify-end">&amp;&amp;与：前后两个操作数必须都是true才返回true,否则返回false</div>
      <div class="absolute left-[177px] top-[406px] w-[280px] border-b border-[#73a1bf] pr-[22px] flex justify-end">&amp;不短路与：作用与&amp;&amp;相同，但没有短路效果</div>
      <div class="absolute left-10 top-[458px] w-[417px] border-b border-[#73a1bf] pr-[22px] flex justify-end">||（或）：只要两个操作数中有一个是true,就可以返回true,否则返回false</div>
      <div class="absolute left-[182px] top-[510px] w-[275px] border-b border-[#73a1bf] pr-[22px] flex justify-end">|(不断路或）：作用于||相同，但没有短路效果</div>
      <div class="absolute left-0 top-[562px] w-[457px] border-b border-[#73a1bf] pr-[22px] flex justify-end">只能有一个操作数，如果操作数为true,则返回false;如果操作数为false,则返回true</div>
      <div class="absolute left-[131px] top-[614px] w-[326px] border-b border-[#73a1bf] pr-[22px] flex justify-end">^(异或）：当两个操作数不同时返回true,否则返回false</div>
      <!-- leaves on the right: the CJK face comes first so that curly quotes are full width -->
      <div class="absolute left-[1122px] top-[265px] w-[216px] border-b border-[#73a1bf] pl-[21px] font-['Noto_Sans_CJK_SC',sans-serif]">“=”代表赋值，“==”代表相等</div>
      <div class="absolute left-[1122px] top-[329px] w-[217px] border-b border-[#73a1bf] pl-[21px] font-['Noto_Sans_CJK_SC',sans-serif]">加“+”、减"-"、乘“*”、除“\"</div>
      <div class="absolute left-[1122px] top-[381px] w-[536px] border-b border-[#73a1bf] pl-[21px] font-['Noto_Sans_CJK_SC',sans-serif]">取模运算”% “：取余数，适用于整数、char类型及浮点数。（两个整数相除，结果仍为整数）</div>
      <div class="absolute left-[1115px] top-[429px] w-[763px] border-b border-[#73a1bf] pl-[21px] font-['Noto_Sans_CJK_SC',sans-serif]">自增”++“及自减”- - “：x++就相当一x+1；x- -就相当于x-1；++在前面：先加1，在使用；++在后面，先使用，再加1（- -也一样）</div>

      <!-- overview -->
      <div class="absolute left-[45px] bottom-[30px] w-[140px] h-[120px] bg-[#fbfbfb] rounded-r shadow-[0_0_4px_rgba(0,0,0,0.3)]">
        <svg class="size-full" viewBox="0 0 140 120" fill="none" stroke="#73a1bf">
          <g stroke-width="2"><path d="M29 40h11M24 44h16M28 47.500h12M26 51h14M27 54.500h13M26 58.500h14M13 62.500h26M20 66h19M10 69.500h29M20 73h19M3 77h36M17 80.500h22M41 48.500h8M41 71h8M75 56.500h8M75 64h8M85 56.500h15M85 61h15M85 64.500h37M85 67.500h52"/></g>
          <path d="M57 60h10" stroke-width="4"/>
          <path d="M39 40q1 0 1 8v10M39 62q1 0 1 8v11M49 48.500c8 0 12 6 13 11.500c-1 6-5 11-13 11M75 56.500c-6 0-12 1-13 3.500c1 2 7 4 13 4M83 64l2 3.500" opacity=".6"/>
          <path d="M7.500 38.500h129.500v42.500H7.500z" stroke="#ff5050" stroke-width="1.500"/>
        </svg>
      </div>
      <!-- zoom panel -->
      <div class="absolute left-[10px] bottom-[10px] w-[35px] h-[240px] rounded bg-[#fc8383] shadow-[3px_3px_6px_rgba(0,0,0,0.3)] flex flex-col items-center pt-2">
        <button aria-label="放大"><svg class="size-[18px] fill-none stroke-white" viewBox="0 0 18 18" stroke-width="1.500"><circle cx="9" cy="9" r="7.500"/><path d="M5 9h8M9 5v8"/></svg></button>
        <svg class="mt-2 w-[10px] h-[70px] fill-white" viewBox="0 0 10 70"><path d="M4 0h2v70H4z"/><circle cx="5" cy="37" r="4"/></svg>
        <button aria-label="缩小" class="mt-1"><svg class="size-[18px] fill-none stroke-white" viewBox="0 0 18 18" stroke-width="1.500"><circle cx="9" cy="9" r="7.500"/><path d="M5 9h8"/></svg></button>
        <button aria-label="移动" class="mt-[7px]"><svg class="size-5 fill-none stroke-white" viewBox="0 0 20 20" stroke-width="1.300"><path d="M10 1v18M1 10h18M7.500 3.500L10 1l2.500 2.500M7.500 16.500L10 19l2.500-2.500M3.500 7.500L1 10l2.500 2.500M16.500 7.500L19 10l-2.500 2.500"/></svg></button>
        <button aria-label="定位" class="mt-1"><svg class="size-5 fill-none stroke-white" viewBox="0 0 20 20" stroke-width="1.500"><circle cx="10" cy="10" r="9"/><path d="M10 1v4M10 15v4M1 10h4M15 10h4"/></svg></button>
        <button aria-label="导航" class="mt-[2px] w-full h-6 bg-[#5c6377] flex items-center justify-center"><svg class="w-5 h-[14px]" viewBox="0 0 20 14"><path d="M0 7c5-9 15-9 20 0-5 9-15 9-20 0z" fill="#fff"/><circle cx="10" cy="7" r="5" fill="#5c6377"/><circle cx="10" cy="7" r="3.200" fill="#fff"/><circle cx="10" cy="7" r="1.500" fill="#5c6377"/></svg></button>
      </div>
      <!-- accelerator ball -->
      <div class="absolute -right-9 top-[651px] size-[60px] rounded-full bg-[#f2f2f2] border border-[#b5b5b5] shadow-[0_3px_8px_rgba(0,0,0,0.35)] p-[3px]">
        <svg class="size-full" viewBox="0 0 52 52"><circle cx="26" cy="26" r="25" fill="url(#gBall)" stroke="#1a9a5c" stroke-width="2"/><text x="5" y="30" fill="#fff" font-size="12" font-weight="700">49%</text></svg>
      </div>
    </main>
  </div>
</div>

<!-- browser status bar -->
<div class="h-6 shrink-0 border-t border-[#c4c4c4] bg-white flex items-center pl-[10px] text-[#555] relative">
  <svg class="size-4" viewBox="0 0 16 16" fill="#ffe3d3" stroke="#f3ab87"><path d="M.5 4.500h15v3H.5zM1.500 7.500h13v8h-13zM8 4.500v11M8 4C5 4 3 .5 5.500 1S8 4 8 4s0-2.500 2.500-3S11 4 8 4z"/></svg>
  <a href="#" class="ml-2">今日优选</a>
  <svg class="ml-[29px] w-2 h-[10px] fill-none stroke-[#888]" viewBox="0 0 8 10"><path d="M.5 1L4 4.500 7.500 1M.5 5L4 8.500 7.500 5"/></svg>
  <a href="#" class="ml-[7px] underline underline-offset-3 text-[#444]">肝癌的真正“元凶”已找到：喝酒顶多排第2，排首位的你忽...</a>
  <div class="ml-auto mr-[197px] flex items-center text-[#888]">
    <a href="#" class="flex items-center gap-2"><svg class="size-4 fill-none stroke-[#12b558]" viewBox="0 0 16 16" stroke-width="1.400"><rect x="1" y="1" width="14" height="14" rx="1"/><path d="M6 4.500l5 3.500-5 3.500z" fill="#12b558"/></svg>快剪辑</a>
    <a href="#" class="ml-[11px] flex items-center gap-2"><svg class="size-4 fill-none stroke-[#12b558]" viewBox="0 0 16 16" stroke-width="1.400"><circle cx="8" cy="8" r="7"/><path d="M6.500 5.500l4 2.500-4 2.500z"/></svg>头条推荐</a>
    <a href="#" class="ml-3 flex items-center gap-2"><svg class="size-4 fill-none stroke-[#12b558]" viewBox="0 0 16 16" stroke-width="1.400"><path d="M3 1h12v14H2.500L1 13.500V5h2M3 1v12M6 5h3v3H6zM11 5h2M11 8h2M6 11h7"/></svg>热点资讯</a>
    <svg class="ml-[17px] size-[15px] fill-none stroke-[#888]" viewBox="0 0 15 15" stroke-width="1.200"><circle cx="8" cy="8" r="6"/><path d="M8 8h3M8 8l2-4M1 8C1 3 5 0 10 1M5 12c-3-3-1-7 3-8"/></svg>
    <svg class="ml-[21px] size-[15px] fill-none stroke-[#888]" viewBox="0 0 15 15" stroke-width="1.200"><path d="M14 1c-5 0-8 3-9 7l2 2c4-1 7-4 7-9zM6 5L2 6l2 3M10 9l-1 4-3-2M4 11l-3 3"/><circle cx="9.500" cy="5.500" r="1"/></svg>
    <a href="#" class="ml-5 flex items-center gap-[9px]"><svg class="w-3 h-[13px] fill-none stroke-[#888]" viewBox="0 0 12 13" stroke-width="1.200"><path d="M6 0v12M.5 6.500L6 12l5.500-5.500"/></svg>下载</a>
    <svg class="ml-[18px] w-[13px] h-[13px] fill-none stroke-[#888]" viewBox="0 0 13 13" stroke-width="1.200"><path d="M1 13V2h8v6H1M9 3.500h3.500L11 6l1.500 2.500H7"/></svg>
  </div>
  <!-- input method bar -->
  <div class="absolute right-0 -top-[7px] z-10 w-[194px] h-[32px] bg-white border-2 border-[#c9d3ea] flex items-center justify-between pl-[5px] pr-[9px] text-[#2f7bf3]">
    <svg class="size-5" viewBox="0 0 20 20"><rect x="1" y="1" width="18" height="18" rx="2" fill="#eaf2ff" stroke="#2f7bf3" stroke-width="1.500"/><path d="M1 12c2 4 4 6 8 7H1z" fill="#2f7bf3"/><path d="M10 10l6-6" stroke="#2f7bf3" stroke-width="1.500"/><circle cx="10" cy="10" r="2.500" fill="#2f7bf3"/></svg>
    <span class="text-[18px] font-bold">英</span>
    <svg class="size-[17px] fill-current" viewBox="0 0 17 17"><path d="M11 0c9 4 7 16-3 17-4 0-7-2-8-5 8 2 13-4 11-12z"/></svg>
    <svg class="w-[13px] h-[15px] fill-current" viewBox="0 0 13 15"><circle cx="2.500" cy="2.500" r="2.200"/><path d="M10 6c4 1 3 7-1.500 9l-.5-1c2-1 2-2.500 1.500-3C7 10 7 6 10 6z"/></svg>
    <svg class="size-[17px] fill-[#8bb5f8]" viewBox="0 0 17 17"><circle cx="8.500" cy="5" r="4.500"/><path d="M0 17c0-8 17-8 17 0z"/></svg>
    <svg class="size-[18px] fill-none stroke-current" viewBox="-9 -9 18 18"><circle r="5" stroke-width="2.500"/><path d="M0-9v3M0 9v-3M-9 0h3M9 0h-3M-6.300-6.300l2 2M6.300 6.300l-2-2M-6.300 6.300l2-2M6.300-6.300l-2 2" stroke-width="2.500"/></svg>
  </div>
</div>

<!-- taskbar -->
<footer class="h-[50px] shrink-0 bg-linear-to-r from-[#d6d6d7] via-[#dddcde] via-60% to-[#e6d9de] flex items-center text-black relative">
  <button aria-label="开始" class="w-[60px] flex justify-center"><svg class="size-5" viewBox="0 0 20 20"><path d="M0 3l8.500-1.200v7.700H0zM9.500 1.600L20 0v9.500H9.500zM0 10.500h8.500v7.700L0 17zM9.500 10.500H20V20L9.500 18.400z"/></svg></button>
  <button aria-label="任务视图" class="w-[64px] pr-1 flex justify-center"><svg class="size-5 fill-none stroke-black" viewBox="0 0 20 20" stroke-width="1.200"><path d="M1 0v3.500h11V0M1 5.500h11v9H1zM1 20v-3.500h11V20M18 0v5M18 10v10"/><path d="M16.500 6h3v3h-3z" fill="#000" stroke="none"/></svg></button>
  <button aria-label="浏览器" class="w-[61px] h-[50px] bg-[#eee] border-b-3 border-[#0078d7] flex items-center justify-center"><svg class="w-7 h-[30px]" viewBox="0 0 28 30"><circle cx="14" cy="15" r="12.500" fill="#fff"/><circle cx="14" cy="15" r="11.500" fill="#4fb81f"/><path d="M8 15h13c0-8-13-8-13 0 0 7 9 8 13 3" fill="none" stroke="#fff" stroke-width="3.500"/><path d="M4 29C-1 25 4 12 14 5c5-4 11-5 12-3M4 29c3 1 6-1 8-3" fill="none" stroke="#4fb81f" stroke-width="2"/></svg></button>
  <button aria-label="文件管理器" class="w-[61px] flex justify-center"><svg class="w-7 h-6" viewBox="0 0 28 24"><path d="M1 3h26v20H1z" fill="#ffd25e"/><path d="M0 0h12l2 2-2 3H0z" fill="#e6a10c"/><path d="M5 24v-9c0-2 1-3 3-3h12c2 0 3 1 3 3v9h-5v-6h-8v6z" fill="#3694dd"/></svg></button>
  <div class="ml-auto flex items-center">
    <svg class="w-4 h-[9px] fill-none stroke-black" viewBox="0 0 16 9" stroke-width="1.400"><path d="M.5 8.500L8 1l7.500 7.500"/></svg>
    <svg class="ml-[13px] w-[17px] h-5" viewBox="0 0 17 20"><ellipse cx="8.500" cy="11" rx="7.500" ry="8" fill="#111"/><ellipse cx="8.500" cy="6" rx="5" ry="6" fill="#111"/><ellipse cx="8.500" cy="14" rx="5" ry="5.500" fill="#fff"/><circle cx="6.500" cy="5" r="1.500" fill="#fff"/><circle cx="10.500" cy="5" r="1.500" fill="#fff"/><path d="M5 8h7l-3.500 1.500z" fill="#f9b233"/><path d="M2 10c4 2 9 2 13 0v2.500c-4 2-6 2-8 1.500v3H4v-4L2 12z" fill="#f0189c"/><circle cx="13" cy="2.500" r="2.500" fill="#f0189c"/><path d="M2 18.500h5M10 18.500h5" stroke="#f9a21c" stroke-width="2.500"/></svg>
    <svg class="ml-[13px] size-5"><use href="#i360"/></svg>
    <svg class="ml-[11px] w-5 h-3" viewBox="0 0 20 12"><path d="M.7.700h16.600v10.600H.7zM19 4v4" fill="none" stroke="#000" stroke-width="1.300"/><path d="M2.500 2.500H6v7H2.500z"/></svg>
    <svg class="ml-3 size-4 fill-none stroke-[#333]" viewBox="0 0 16 16" stroke-width="1.300"><path d="M1 16C1 7 7 1 16 1M5 16C5 9 9 5 16 5M9 16c0-4 3-7 7-7"/><circle cx="14" cy="14" r="1.700" fill="#000"/></svg>
    <svg class="ml-3 w-[19px] h-[14px] fill-none stroke-black" viewBox="0 0 19 14" stroke-width="1.200"><path d="M.6 4.500H4L8 1v12L4 9.500H.6zM11.500 4.500l5 5M16.500 4.500l-5 5"/></svg>
    <span class="ml-3 w-[18px] text-[18px] text-[#333]">英</span>
    <svg class="ml-4 size-5" viewBox="0 0 20 20"><rect x=".7" y=".7" width="18.600" height="18.600" rx="2" fill="#fff" stroke="#333" stroke-width="1.200"/><path d="M1 12c2 4 4 6 8 7M10 10l6-6" fill="none" stroke="#333" stroke-width="1.300"/><circle cx="10" cy="10" r="2" fill="#333"/></svg>
    <time class="ml-4 w-[86px] text-center leading-[23px]">13:39<br>2019/10/26</time>
    <svg class="ml-[18px] mr-[31px] size-5 fill-none stroke-black" viewBox="0 0 20 20" stroke-width="1.400"><path d="M1 1h18v14h-6l-3 3.500L9 15H1z"/></svg>
  </div>
  <span class="absolute right-[10px] bottom-2 text-[15px] text-white/70 text-shadow-[0_0_2px_rgba(0,0,0,0.3)]">https://blog.csdn.net/qq_45728258</span>
</footer>

<!-- browser logo -->
<svg class="absolute left-3 top-[7px] w-[46px] h-[56px]" viewBox="0 0 46 56"><path d="M23 0c13 0 23 10 23 22 0 9-6 15-13 20L22 45C9 40 0 33 0 22 0 10 10 0 23 0z" fill="url(#gLogo)"/><path d="M42 32L20 54l-6 1 6-12z" fill="url(#gTail)"/><path d="M12 23h23c0-15-24-16-24 0 0 14 16 14 22 7" fill="none" stroke="#fff" stroke-width="5"/></svg>
</body>
</html>
